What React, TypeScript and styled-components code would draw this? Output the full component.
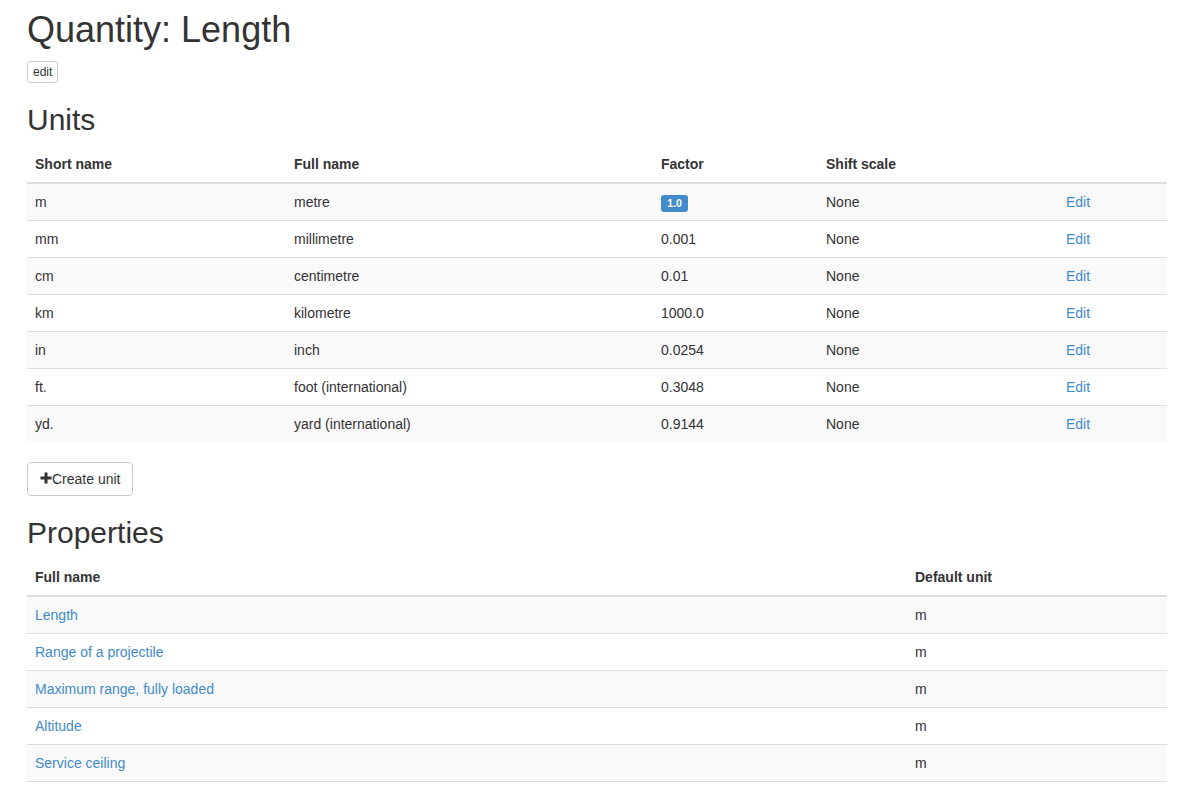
import React from "react";
import styled, { createGlobalStyle } from "styled-components";

const GlobalStyle = createGlobalStyle`
  html, body {
    margin: 0;
    padding: 0;
    background: #fff;
  }
  body {
    font-family: "Liberation Sans", Arial, Helvetica, sans-serif;
    font-size: 14px;
    line-height: 20px;
    color: #333;
  }
  * { box-sizing: border-box; }
`;

const Page = styled.div`
  width: 1140px;
  margin-left: 27px;
`;

const Title = styled.h1`
  font-size: 36px;
  font-weight: 500;
  line-height: 39.6px;
  margin: 10px 0 11px;
  color: #333;
`;

const SectionTitle = styled.h2`
  font-size: 30px;
  font-weight: 500;
  line-height: 33px;
  margin: 20px 0 10px;
  color: #333;
`;

const Toolbar = styled.div`
  display: flex;
`;

const Button = styled.button<{ $size?: "xs" | "md" }>`
  display: inline-flex;
  align-items: center;
  font-family: inherit;
  color: #333;
  background: #fff;
  border: 1px solid #ccc;
  cursor: pointer;
  font-size: ${(p) => (p.$size === "xs" ? "12px" : "14px")};
  line-height: ${(p) => (p.$size === "xs" ? "18px" : "20px")};
  padding: ${(p) => (p.$size === "xs" ? "1px 5px" : "6px 12px")};
  border-radius: ${(p) => (p.$size === "xs" ? "3px" : "4px")};
  height: ${(p) => (p.$size === "xs" ? "22px" : "34px")};
`;

const PlusIcon = styled.svg`
  width: 12px;
  height: 12px;
  flex: none;
  margin-top: -1px;
`;

const Table = styled.table<{ $closed?: boolean }>`
  width: 100%;
  border-collapse: collapse;
  border-spacing: 0;
  margin-bottom: 20px;
  table-layout: fixed;
  border-bottom: ${(p) => (p.$closed ? "1px solid #ddd" : "none")};
`;

const HeadCell = styled.th<{ $width: number }>`
  width: ${(p) => p.$width}px;
  text-align: left;
  font-weight: bold;
  padding: 8px;
  line-height: 20px;
  vertical-align: bottom;
  border-bottom: 2px solid #ddd;
`;

const Row = styled.tr`
  &:nth-child(odd) {
    background: #f9f9f9;
  }
`;

const Cell = styled.td`
  padding: 8px;
  line-height: 20px;
  vertical-align: top;
  border-top: 1px solid #ddd;
`;

const Link = styled.a`
  color: #428bca;
  text-decoration: none;
  cursor: pointer;
`;

const Label = styled.span`
  display: inline;
  background: #428bca;
  color: #fff;
  font-size: 10.5px;
  font-weight: bold;
  line-height: 1;
  padding: 2.1px 6.3px 3.15px;
  border-radius: 3px;
  white-space: nowrap;
  vertical-align: baseline;
`;

const units = [
  { short: "m", full: "metre", factor: "1.0", base: true },
  { short: "mm", full: "millimetre", factor: "0.001" },
  { short: "cm", full: "centimetre", factor: "0.01" },
  { short: "km", full: "kilometre", factor: "1000.0" },
  { short: "in", full: "inch", factor: "0.0254" },
  { short: "ft.", full: "foot (international)", factor: "0.3048" },
  { short: "yd.", full: "yard (international)", factor: "0.9144" },
];

const properties = [
  "Length",
  "Range of a projectile",
  "Maximum range, fully loaded",
  "Altitude",
  "Service ceiling",
];

export default function App() {
  return (
    <>
      <GlobalStyle />
      <Page>
        <Title>Quantity: Length</Title>
        <Toolbar>
          <Button $size="xs">edit</Button>
        </Toolbar>

        <SectionTitle>Units</SectionTitle>
        <Table>
          <thead>
            <tr>
              <HeadCell $width={259}>Short name</HeadCell>
              <HeadCell $width={367}>Full name</HeadCell>
              <HeadCell $width={165}>Factor</HeadCell>
              <HeadCell $width={240}>Shift scale</HeadCell>
              <HeadCell $width={109}></HeadCell>
            </tr>
          </thead>
          <tbody>
            {units.map((u) => (
              <Row key={u.short}>
                <Cell>{u.short}</Cell>
                <Cell>{u.full}</Cell>
                <Cell>{u.base ? <Label>{u.factor}</Label> : u.factor}</Cell>
                <Cell>None</Cell>
                <Cell>
                  <Link>Edit</Link>
                </Cell>
              </Row>
            ))}
          </tbody>
        </Table>

        <Toolbar>
          <Button $size="md">
            <PlusIcon viewBox="0 0 12 12" aria-hidden="true">
              <path d="M4.5 0.5h3v4h4v3h-4v4h-3v-4h-4v-3h4z" fill="#333" />
            </PlusIcon>
            Create unit
          </Button>
        </Toolbar>

        <SectionTitle>Properties</SectionTitle>
        <Table $closed>
          <thead>
            <tr>
              <HeadCell $width={880}>Full name</HeadCell>
              <HeadCell $width={260}>Default unit</HeadCell>
            </tr>
          </thead>
          <tbody>
            {properties.map((p) => (
              <Row key={p}>
                <Cell>
                  <Link>{p}</Link>
                </Cell>
                <Cell>m</Cell>
              </Row>
            ))}
          </tbody>
        </Table>
      </Page>
    </>
  );
}
